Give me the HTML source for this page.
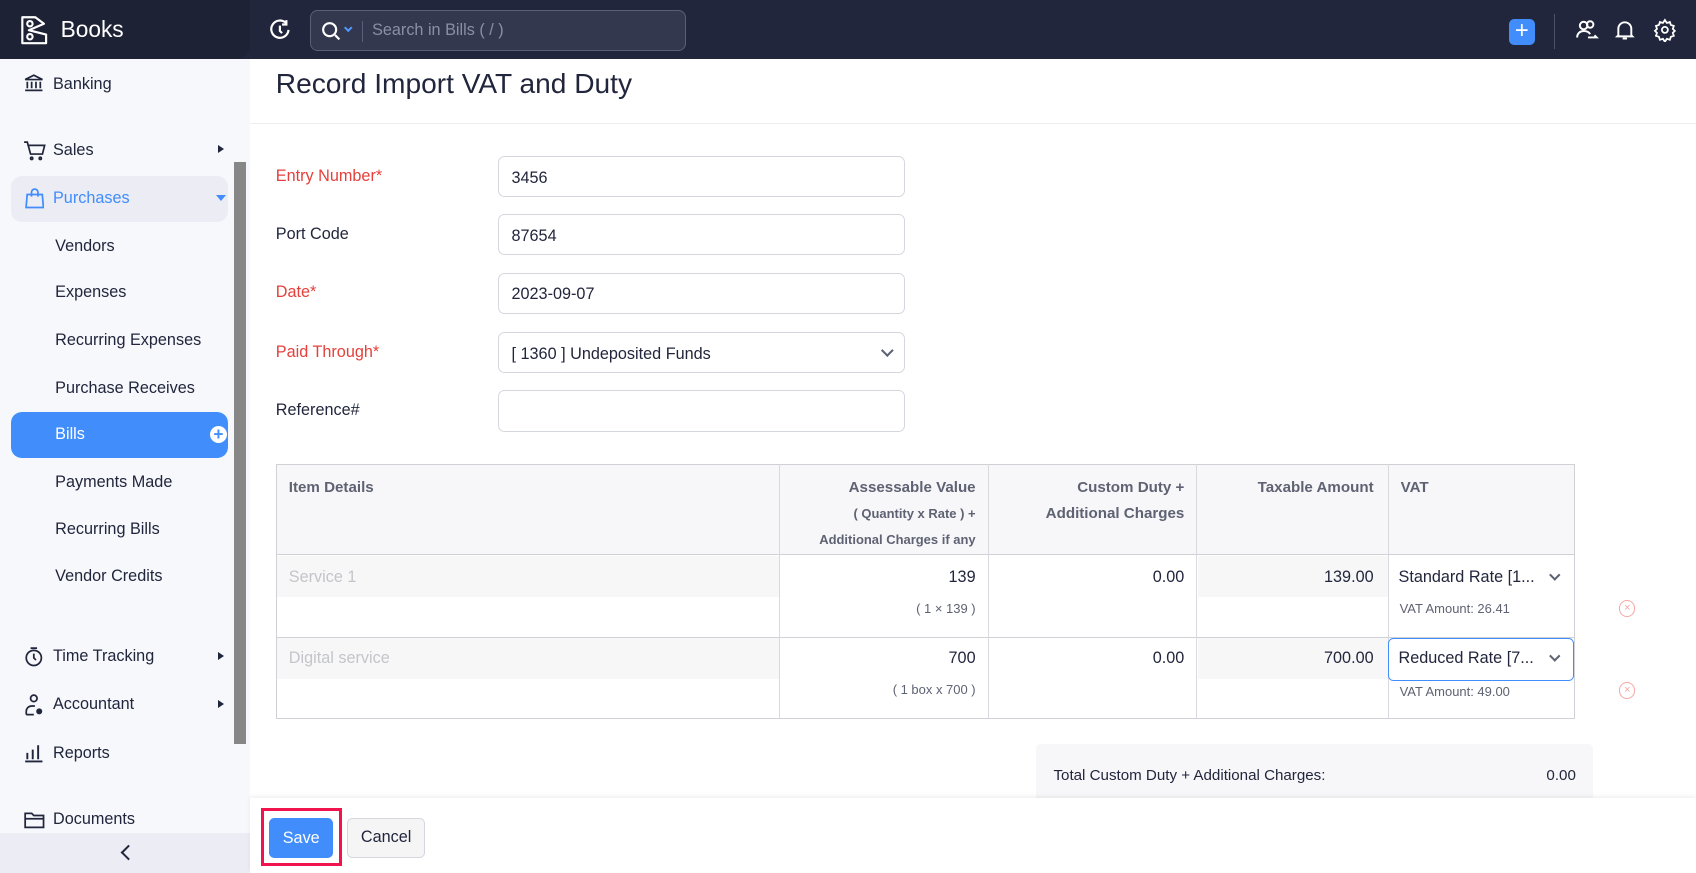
<!DOCTYPE html>
<html><head><meta charset="utf-8"><style>
*{box-sizing:border-box;margin:0;padding:0}
html,body{width:1696px;height:873px;overflow:hidden;background:#fff}
#w{zoom:1.0816;width:1568px;height:807px;position:relative;font-family:"Liberation Sans",sans-serif;color:#21263c;overflow:hidden}
.a{position:absolute}
.top{left:0;top:0;width:1568px;height:55px;background:#21263c}
.logo{left:0;top:0;width:231px;height:55px;background:#1e2235;border-radius:0 0 12px 0}
.side{left:0;top:55px;width:231px;height:752px;background:#f7f8fc}
.si{position:absolute;left:49px;font-size:15px;color:#21263c}
.sub{left:51px}
.ic{position:absolute;left:21px}
.lbl{position:absolute;left:255px;font-size:15px;color:#21263c}
.red{color:#e5403b}
.inp{position:absolute;left:460px;width:377px;height:38px;border:1px solid #d5d7de;border-radius:6px;font-size:15px;padding:11px 12px;color:#21263c}
.th{position:absolute;font-size:14px;color:#5e6272;font-weight:bold;text-align:right;line-height:24px}
.sm{font-size:12px;line-height:24px;font-weight:bold}
.cell{position:absolute;font-size:15px;text-align:right}
</style></head><body><div id="w">
<div class="a top"></div>
<div class="a logo"></div>
<svg class="a" style="left:17px;top:13px" width="30" height="30" viewBox="0 0 30 30" fill="none" stroke="#fff" stroke-width="2"><path d="M4 3h12l8 6-14 6 16 4v8H4z" stroke-linejoin="round"/><circle cx="11" cy="9" r="2.5"/><circle cx="11" cy="21" r="2.5"/></svg>
<div class="a" style="left:56px;top:15px;font-size:21px;color:#fff">Books</div>
<svg class="a" style="left:248px;top:17px" width="22" height="22" viewBox="0 0 22 22" fill="none" stroke="#fff" stroke-width="2"><path d="M17 5A8 8 0 1 0 19 11"/><path d="M17 2v4h-4"/><path d="M11 7v5l2 2"/></svg>
<div class="a" style="left:287px;top:9px;width:347px;height:38px;border:1px solid #5a5f75;border-radius:7px;background:#33384f"></div>
<svg class="a" style="left:297px;top:19px" width="20" height="20" viewBox="0 0 20 20" fill="none" stroke="#fff" stroke-width="2"><circle cx="8" cy="8" r="6"/><path d="M13 13l4 4"/></svg>
<div class="a" style="left:319px;top:23px;width:6px;height:6px;border-right:2px solid #4f9bff;border-bottom:2px solid #4f9bff;transform:rotate(45deg)"></div>
<div class="a" style="left:335px;top:19px;width:1px;height:20px;background:#5a5f75"></div>
<div class="a" style="left:344px;top:19px;font-size:15px;color:#8b8fa3">Search in Bills ( / )</div>
<div class="a" style="left:1395px;top:18px;width:24px;height:24px;background:#408dfb;border-radius:5px;color:#fff;font-size:22px;line-height:23px;text-align:center">+</div>
<div class="a" style="left:1437px;top:13px;width:1px;height:32px;background:#4d5266"></div>
<svg class="a" style="left:1456px;top:17px" width="22" height="22" viewBox="0 0 22 22" fill="none" stroke="#fff" stroke-width="1.8"><circle cx="8" cy="7" r="3.5"/><path d="M2 18c0-4 3-6 6-6s5 1 6 3"/><circle cx="14" cy="6" r="3"/><path d="M12 18h8l-2-2"/></svg>
<svg class="a" style="left:1492px;top:17px" width="20" height="22" viewBox="0 0 20 22" fill="none" stroke="#fff" stroke-width="1.8"><path d="M4 16V10a6 6 0 0 1 12 0v6l1 1H3z"/><path d="M8 19h4"/></svg>
<svg class="a" style="left:1528px;top:17px" width="22" height="22" viewBox="0 0 24 24" fill="none" stroke="#fff" stroke-width="1.8"><circle cx="12" cy="12" r="3"/><path d="M12 2l2 3 3-1 1 3 3 1-1 3 2 2-2 2 1 3-3 1-1 3-3-1-2 3-2-3-3 1-1-3-3-1 1-3-2-2 2-2-1-3 3-1 1-3 3 1z"/></svg>

<div class="a side"></div>
<div class="a" style="left:216px;top:150px;width:11px;height:538px;background:#878787"></div>
<div class="a" style="left:10px;top:163px;width:201px;height:42px;background:#ececf5;border-radius:10px"></div>
<div class="a" style="left:10px;top:381px;width:201px;height:42px;background:#408dfb;border-radius:10px"></div>
<svg class="ic" style="top:67px" width="20" height="20" viewBox="0 0 20 20" fill="none" stroke="#21263c" stroke-width="1.6"><path d="M2 7l8-4 8 4zM4 9v6M8 9v6M12 9v6M16 9v6M2 17h16"/></svg>
<div class="si" style="top:69px">Banking</div>
<svg class="ic" style="top:129px" width="22" height="20" viewBox="0 0 22 20" fill="none" stroke="#21263c" stroke-width="1.6"><path d="M1 2h3l3 11h11l2-8H5"/><circle cx="8" cy="17" r="1"/><circle cx="16" cy="17" r="1"/></svg>
<div class="si" style="top:130px">Sales</div>
<div class="a" style="left:202px;top:134px;border-left:6px solid #21263c;border-top:4px solid transparent;border-bottom:4px solid transparent"></div>
<svg class="ic" style="top:174px;left:23px" width="18" height="20" viewBox="0 0 18 20" fill="none" stroke="#408dfb" stroke-width="1.6"><path d="M2 6h14l1 12H1zM6 8V4a3 3 0 0 1 6 0v4"/></svg>
<div class="si" style="top:175px;color:#408dfb">Purchases</div>
<div class="a" style="left:200px;top:180px;border-top:6px solid #408dfb;border-left:5px solid transparent;border-right:5px solid transparent"></div>
<div class="si sub" style="top:219px">Vendors</div>
<div class="si sub" style="top:262px">Expenses</div>
<div class="si sub" style="top:306px">Recurring Expenses</div>
<div class="si sub" style="top:350px">Purchase Receives</div>
<div class="si sub" style="top:393px;color:#fff">Bills</div>
<div class="a" style="left:194px;top:394px;width:16px;height:16px;border-radius:50%;background:#fff;color:#408dfb;font-size:16px;line-height:16px;text-align:center;font-weight:bold">+</div>
<div class="si sub" style="top:437px">Payments Made</div>
<div class="si sub" style="top:481px">Recurring Bills</div>
<div class="si sub" style="top:524px">Vendor Credits</div>
<svg class="ic" style="top:597px" width="20" height="20" viewBox="0 0 20 20" fill="none" stroke="#21263c" stroke-width="1.6"><circle cx="10" cy="11" r="7"/><path d="M7 2h6M10 7v4l2 2"/></svg>
<div class="si" style="top:598px">Time Tracking</div>
<div class="a" style="left:202px;top:603px;border-left:6px solid #21263c;border-top:4px solid transparent;border-bottom:4px solid transparent"></div>
<svg class="ic" style="top:641px" width="20" height="22" viewBox="0 0 20 22" fill="none" stroke="#21263c" stroke-width="1.6"><circle cx="10" cy="5" r="3"/><path d="M3 20v-3a5 5 0 0 1 5-5h3M3 20h7"/><circle cx="15" cy="17" r="2" fill="#21263c"/></svg>
<div class="si" style="top:643px">Accountant</div>
<div class="a" style="left:202px;top:647px;border-left:6px solid #21263c;border-top:4px solid transparent;border-bottom:4px solid transparent"></div>
<svg class="ic" style="top:686px" width="20" height="20" viewBox="0 0 20 20" fill="none" stroke="#21263c" stroke-width="1.8"><path d="M4 10v6M9 7v9M14 3v13M2 18h16"/></svg>
<div class="si" style="top:688px">Reports</div>
<svg class="ic" style="top:748px" width="22" height="20" viewBox="0 0 22 20" fill="none" stroke="#21263c" stroke-width="1.6"><path d="M2 4h6l2 2h9v11H2zM2 9h17"/></svg>
<div class="si" style="top:749px">Documents</div>
<div class="a" style="left:0;top:770px;width:231px;height:37px;background:#ececf4"></div>
<div class="a" style="left:114px;top:783px;width:10px;height:10px;border-left:2px solid #21263c;border-bottom:2px solid #21263c;transform:rotate(45deg)"></div>

<div class="a" style="left:255px;top:63px;font-size:26px;color:#21263c">Record Import VAT and Duty</div>
<div class="a" style="left:231px;top:114px;width:1337px;height:1px;background:#eceef2"></div>

<div class="lbl red" style="top:154px">Entry Number*</div>
<div class="inp" style="top:144px">3456</div>
<div class="lbl" style="top:208px">Port Code</div>
<div class="inp" style="top:198px">87654</div>
<div class="lbl red" style="top:262px">Date*</div>
<div class="inp" style="top:252px">2023-09-07</div>
<div class="lbl red" style="top:317px">Paid Through*</div>
<div class="inp" style="top:307px">[ 1360 ] Undeposited Funds</div>
<div class="a" style="left:816px;top:320px;width:8px;height:8px;border-right:2px solid #5e6272;border-bottom:2px solid #5e6272;transform:rotate(45deg)"></div>
<div class="lbl" style="top:371px">Reference#</div>
<div class="inp" style="top:361px"></div>

<div class="a" style="left:255px;top:429px;width:1201px;height:236px;border:1px solid #cfd1d6"></div>
<div class="a" style="left:256px;top:430px;width:1199px;height:83px;background:#f7f7f9;border-bottom:1px solid #cfd1d6"></div>
<div class="a" style="left:255px;top:589px;width:1201px;height:1px;background:#cfd1d6"></div>
<div class="a" style="left:720px;top:429px;width:1px;height:236px;background:#d8dadf"></div>
<div class="a" style="left:913px;top:429px;width:1px;height:236px;background:#d8dadf"></div>
<div class="a" style="left:1106px;top:429px;width:1px;height:236px;background:#d8dadf"></div>
<div class="a" style="left:1283px;top:429px;width:1px;height:236px;background:#d8dadf"></div>
<div class="th" style="left:267px;top:439px;text-align:left">Item Details</div>
<div class="th" style="left:722px;top:439px;width:180px">Assessable Value<br><span class="sm">( Quantity x Rate ) +<br>Additional Charges if any</span></div>
<div class="th" style="left:915px;top:439px;width:180px">Custom Duty +<br>Additional Charges</div>
<div class="th" style="left:1108px;top:439px;width:162px">Taxable Amount</div>
<div class="th" style="left:1295px;top:439px;text-align:left">VAT</div>

<div class="a" style="left:256px;top:514px;width:464px;height:38px;background:#f7f7f8"></div>
<div class="a" style="left:267px;top:525px;font-size:15px;color:#c4c5ca">Service 1</div>
<div class="cell" style="left:722px;top:525px;width:180px">139</div>
<div class="cell" style="left:722px;top:556px;width:180px;font-size:12px;color:#5e6272">( 1 × 139 )</div>
<div class="cell" style="left:915px;top:525px;width:180px">0.00</div>
<div class="a" style="left:1108px;top:514px;width:175px;height:38px;background:#f7f7f8"></div>
<div class="cell" style="left:1108px;top:525px;width:162px">139.00</div>
<div class="a" style="left:1293px;top:525px;font-size:15px">Standard Rate [1...</div>
<div class="a" style="left:1434px;top:528px;width:7px;height:7px;border-right:2px solid #5e6272;border-bottom:2px solid #5e6272;transform:rotate(45deg)"></div>
<div class="a" style="left:1294px;top:556px;font-size:12px;color:#5e6272">VAT Amount: 26.41</div>
<div class="a" style="left:1497px;top:555px;width:15px;height:15px;border:1px solid #f3a7a5;border-radius:50%;color:#f3a7a5;font-size:10px;line-height:13px;text-align:center">×</div>

<div class="a" style="left:256px;top:590px;width:464px;height:38px;background:#f7f7f8"></div>
<div class="a" style="left:267px;top:600px;font-size:15px;color:#c4c5ca">Digital service</div>
<div class="cell" style="left:722px;top:600px;width:180px">700</div>
<div class="cell" style="left:722px;top:631px;width:180px;font-size:12px;color:#5e6272">( 1 box x 700 )</div>
<div class="cell" style="left:915px;top:600px;width:180px">0.00</div>
<div class="a" style="left:1108px;top:590px;width:175px;height:38px;background:#f7f7f8"></div>
<div class="cell" style="left:1108px;top:600px;width:162px">700.00</div>
<div class="a" style="left:1283px;top:590px;width:172px;height:40px;border:1px solid #408dfb;border-radius:5px"></div>
<div class="a" style="left:1293px;top:600px;font-size:15px">Reduced Rate [7...</div>
<div class="a" style="left:1434px;top:603px;width:7px;height:7px;border-right:2px solid #5e6272;border-bottom:2px solid #5e6272;transform:rotate(45deg)"></div>
<div class="a" style="left:1294px;top:632px;font-size:12px;color:#5e6272">VAT Amount: 49.00</div>
<div class="a" style="left:1497px;top:631px;width:15px;height:15px;border:1px solid #f3a7a5;border-radius:50%;color:#f3a7a5;font-size:10px;line-height:13px;text-align:center">×</div>

<div class="a" style="left:958px;top:688px;width:515px;height:60px;background:#f7f7f9;border-radius:4px"></div>
<div class="a" style="left:974px;top:709px;font-size:14px">Total Custom Duty + Additional Charges:</div>
<div class="a" style="left:1380px;top:709px;width:77px;text-align:right;font-size:14px">0.00</div>

<div class="a" style="left:231px;top:738px;width:1337px;height:69px;background:#fff;box-shadow:0 -2px 4px rgba(0,0,0,.06)"></div>
<div class="a" style="left:241px;top:747px;width:75px;height:54px;border:3px solid #f0134d"></div>
<div class="a" style="left:249px;top:756px;width:59px;height:37px;background:#408dfb;border-radius:5px;color:#fff;font-size:15px;line-height:37px;text-align:center">Save</div>
<div class="a" style="left:321px;top:756px;width:72px;height:37px;background:#f5f5f5;border:1px solid #d5d7de;border-radius:5px;font-size:15px;line-height:35px;text-align:center">Cancel</div>
</div></body></html>
